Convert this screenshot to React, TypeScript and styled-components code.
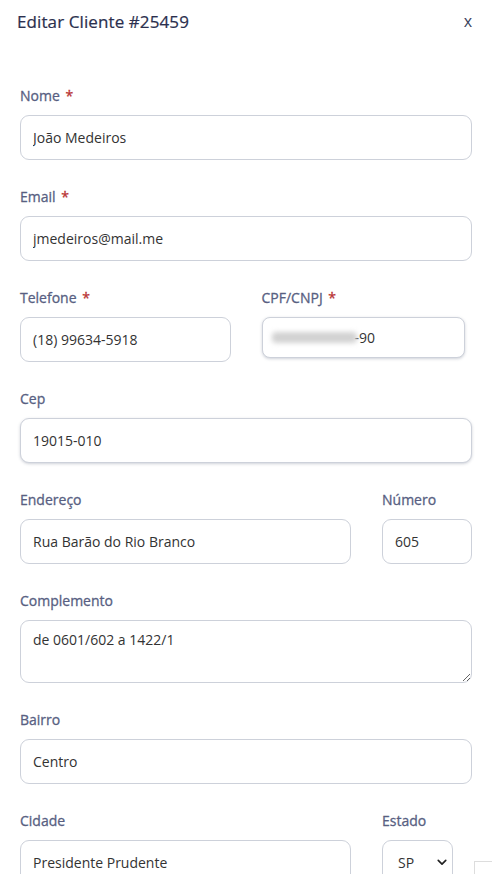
import React, { useState } from 'react';
import styled, { createGlobalStyle } from 'styled-components';

const GlobalStyle = createGlobalStyle`
  html, body {
    margin: 0;
    padding: 0;
    background: #fff;
    height: 874px;
    overflow: hidden;
  }
  * { box-sizing: border-box; }
  body {
    font-family: "Open Sans", "Noto Sans", sans-serif;
  }
`;

const EditClientPage: React.FC = () => {
  const [form, setForm] = useState({
    nome: 'João Medeiros',
    email: 'jmedeiros@mail.me',
    telefone: '(18) 99634-5918',
    cep: '19015-010',
    endereco: 'Rua Barão do Rio Branco',
    numero: '605',
    complemento: 'de 0601/602 a 1422/1',
    bairro: 'Centro',
    cidade: 'Presidente Prudente',
    estado: 'SP',
  });

  const set = (key: keyof typeof form) => (e: React.ChangeEvent<HTMLInputElement | HTMLTextAreaElement | HTMLSelectElement>) =>
    setForm({ ...form, [key]: e.target.value });

  return (
    <Wrapper>
      <Header>
        <Title>Editar Cliente #25459</Title>
        <CloseBtn>x</CloseBtn>
      </Header>
      <Body>
        <Group>
          <Label>Nome <Req>*</Req></Label>
          <Input value={form.nome} onChange={set('nome')} />
        </Group>
        <Group>
          <Label>Email <Req>*</Req></Label>
          <Input value={form.email} onChange={set('email')} />
        </Group>
        <Row $cols="1fr 1fr">
          <Group>
            <Label>Telefone <Req>*</Req></Label>
            <Input value={form.telefone} onChange={set('telefone')} />
          </Group>
          <Group>
            <Label>CPF/CNPJ <Req>*</Req></Label>
            <MaskedBox>
              <Blurred />
              <span>-90</span>
            </MaskedBox>
          </Group>
        </Row>
        <Group>
          <Label>Cep</Label>
          <Input $raised value={form.cep} onChange={set('cep')} />
        </Group>
        <Row $cols="1fr 90px">
          <Group>
            <Label>Endereço</Label>
            <Input value={form.endereco} onChange={set('endereco')} />
          </Group>
          <Group>
            <Label>Número</Label>
            <Input value={form.numero} onChange={set('numero')} />
          </Group>
        </Row>
        <Group>
          <Label>Complemento</Label>
          <TextArea value={form.complemento} onChange={set('complemento')} />
        </Group>
        <Group>
          <Label>Bairro</Label>
          <Input value={form.bairro} onChange={set('bairro')} />
        </Group>
        <Row $cols="1fr 90px">
          <Group>
            <Label>Cidade</Label>
            <Input value={form.cidade} onChange={set('cidade')} />
          </Group>
          <Group>
            <Label>Estado</Label>
            <SelectWrap>
              <Select value={form.estado} onChange={set('estado')}>
                <option value="SP">SP</option>
                <option value="RJ">RJ</option>
                <option value="MG">MG</option>
              </Select>
              <Chevron viewBox="0 0 12 8">
                <path d="M1.5 1.5 L6 6 L10.5 1.5" fill="none" stroke="#222" strokeWidth="2" strokeLinecap="round" strokeLinejoin="round" />
              </Chevron>
            </SelectWrap>
          </Group>
        </Row>
      </Body>
      <Badge>
        <svg width="10" height="10" viewBox="0 0 10 10">
          <path d="M7.5 3 A3 3 0 1 0 7.5 7" fill="none" stroke="#bbb" strokeWidth="1" />
        </svg>
      </Badge>
    </Wrapper>
  );
};

const Wrapper = styled.div`
  width: 492px;
  height: 874px;
  position: relative;
  overflow: hidden;
  background: #fff;
`;

const Header = styled.div`
  display: flex;
  align-items: center;
  justify-content: space-between;
  padding: 10px 17px 0 17px;
  height: 32px;
`;

const Title = styled.h4`
  margin: 0;
  font-size: 17px;
  font-weight: 500;
  color: #2b2f4e;
  letter-spacing: 0.1px;
  -webkit-text-stroke: 0.2px #2b2f4e;
`;

const CloseBtn = styled.button`
  border: none;
  background: none;
  padding: 0;
  font-family: inherit;
  font-size: 16px;
  color: #3a3f5c;
  margin-right: 3px;
  cursor: pointer;
`;

const Body = styled.div`
  padding: 54px 20px 0 20px;
  display: flex;
  flex-direction: column;
  gap: 27px;
`;

const Row = styled.div<{ $cols: string }>`
  display: grid;
  grid-template-columns: ${(p) => p.$cols};
  column-gap: 31px;
`;

const Group = styled.div`
  display: flex;
  flex-direction: column;
  gap: 9px;
  min-width: 0;
`;

const Label = styled.label`
  font-size: 14px;
  line-height: 20px;
  font-weight: 400;
  color: #585f82;
  -webkit-text-stroke: 0.3px #585f82;
`;

const Req = styled.span`
  color: #b83232;
  -webkit-text-stroke: 0.3px #b83232;
  margin-left: 2px;
`;

const Input = styled.input<{ $raised?: boolean }>`
  width: 100%;
  height: 45px;
  border: 1px solid #cdd1da;
  border-radius: 9px;
  padding: 0 12px;
  font-family: inherit;
  font-size: 14px;
  color: #333;
  background: #fff;
  outline: none;
  box-shadow: ${(p) => (p.$raised ? '0 1px 3px rgba(60, 70, 100, 0.25)' : 'none')};
`;

const MaskedBox = styled.div`
  width: 203px;
  height: 41px;
  border: 1px solid #cdd1da;
  border-radius: 8px;
  padding: 0 11px 0 9px;
  display: flex;
  align-items: center;
  font-size: 14px;
  color: #333;
  background: #fff;
  box-shadow: 0 1px 3px rgba(60, 70, 100, 0.25);
`;

const Blurred = styled.span`
  display: inline-block;
  width: 85px;
  height: 11px;
  margin-right: -2px;
  background: #d2d2d2;
  border-radius: 4px;
  filter: blur(2.5px);
`;

const TextArea = styled.textarea`
  width: 100%;
  height: 63px;
  border: 1px solid #cdd1da;
  border-radius: 9px;
  padding: 9px 12px;
  font-family: inherit;
  font-size: 14px;
  color: #333;
  background: #fff;
  outline: none;
  resize: vertical;
  display: block;
`;

const SelectWrap = styled.div`
  position: relative;
  width: 71px;
`;

const Select = styled.select`
  appearance: none;
  width: 71px;
  height: 45px;
  border: 1px solid #cdd1da;
  border-radius: 9px;
  padding: 0 0 0 15px;
  font-family: inherit;
  font-size: 14px;
  color: #333;
  background: #fff;
  outline: none;
`;

const Chevron = styled.svg`
  position: absolute;
  right: 6px;
  top: 19px;
  width: 10px;
  height: 7px;
  pointer-events: none;
`;

const Badge = styled.div`
  position: absolute;
  left: 474px;
  top: 861px;
  width: 30px;
  height: 30px;
  border: 1px solid #ddd;
  background: #fff;
  padding: 4px 0 0 4px;
`;

const App: React.FC = () => (
  <>
    <GlobalStyle />
    <EditClientPage />
  </>
);

export default App;
